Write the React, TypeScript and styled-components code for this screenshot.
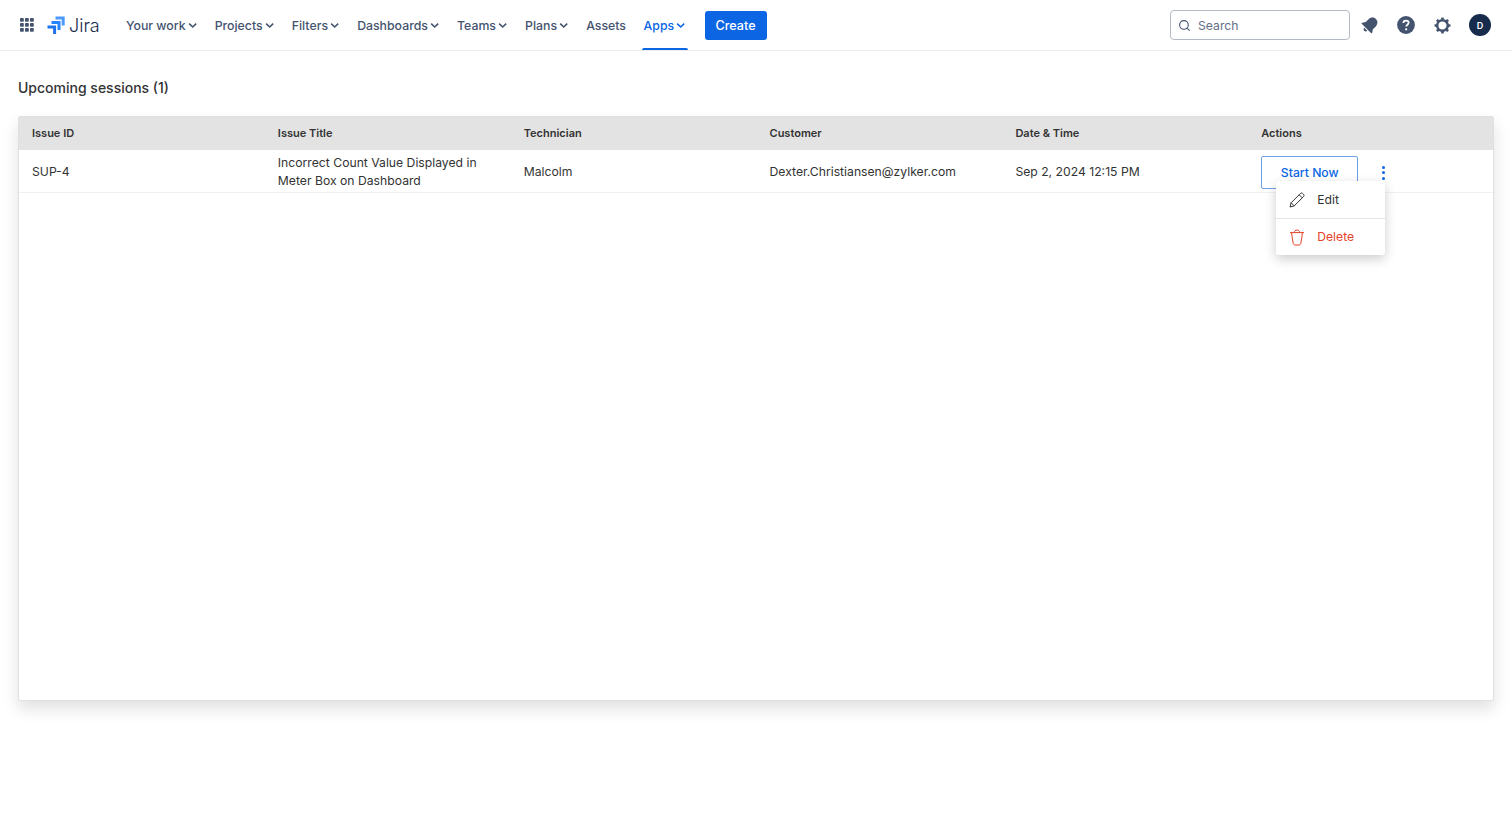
import React from "react";
import styled, { createGlobalStyle } from "styled-components";
import { Search as SearchIcon } from "lucide-react";

const Global = createGlobalStyle`
  html, body { margin: 0; padding: 0; background: #fff; }
  body { font-family: Inter, "Liberation Sans", sans-serif; -webkit-font-smoothing: antialiased; }
  * { box-sizing: border-box; }
`;

const Page = styled.div`
  width: 1512px;
  height: 824px;
  overflow: hidden;
`;

const TopBar = styled.header`
  height: 51px;
  border-bottom: 1px solid #ebecf0;
  display: flex;
  align-items: center;
  padding: 0 21px 0 19px;
`;

const LogoWrap = styled.div`
  display: flex;
  align-items: center;
  margin-left: 12px;
  width: 68px;
`;

const JiraName = styled.span`
  font-family: Inter, "Liberation Sans", sans-serif;
  font-size: 18px;
  font-weight: 300;
  color: #172b4d;
  margin-left: 4px;
`;

const Nav = styled.nav`
  display: flex;
  align-items: stretch;
  height: 50px;
  margin-left: 9px;
`;

const NavItem = styled.div<{ $active?: boolean }>`
  position: relative;
  display: flex;
  align-items: center;
  padding: 0 2px;
  margin-right: 13.6px;
  font-size: 12.3px;
  font-weight: 500;
  color: ${(p) => (p.$active ? "#0c66e4" : "#44546f")};
  ${(p) =>
    p.$active &&
    `&::after { content: ""; position: absolute; left: 0; right: 0; bottom: 0; height: 2px; border-radius: 2px 2px 0 0; background: #0c66e4; }`}
`;

const CreateButton = styled.button`
  width: 62px;
  height: 29px;
  margin-left: 3.3px;
  border: none;
  border-radius: 3px;
  background: #0c66e4;
  color: #fff;
  font: 500 12.6px Inter, sans-serif;
  padding: 0;
`;

const Right = styled.div`
  margin-left: auto;
  display: flex;
  align-items: center;
`;

const SearchBox = styled.div`
  width: 180px;
  height: 30px;
  border: 1px solid #b3b9c4;
  border-radius: 4px;
  display: flex;
  align-items: center;
  gap: 7px;
  padding: 0 7px;
  font-size: 12.2px;
  color: #626f86;
  margin-right: 10px;
`;

const IconButton = styled.span`
  width: 20px;
  height: 20px;
  margin-right: 16px;
  display: flex;
  align-items: center;
  justify-content: center;
`;

const Avatar = styled.span`
  width: 22px;
  height: 22px;
  margin-left: 1px;
  border-radius: 50%;
  background: #172b4d;
  color: #fff;
  font-size: 9px;
  font-weight: 600;
  display: flex;
  align-items: center;
  justify-content: center;
`;

const Main = styled.main`
  padding: 27px 18px 0;
`;

const Title = styled.h1`
  margin: 0 0 18px;
  height: 20px;
  font-size: 14px;
  line-height: 20px;
  font-weight: 500;
  color: #333;
`;

const Card = styled.section`
  position: relative;
  height: 585px;
  border: 1px solid #e0e0e0;
  border-radius: 2px;
  box-shadow: 0 8px 16px rgba(0, 0, 0, 0.12);
  background: #fff;
`;

const Row = styled.div`
  display: grid;
  grid-template-columns: repeat(6, 245.85px);
  padding-left: 13px;
`;

const HeadRow = styled(Row)`
  height: 33px;
  padding-bottom: 2px;
  background: #e3e3e3;
  align-items: center;
  font-size: 11px;
  font-weight: 600;
  color: #333;
`;

const BodyRow = styled(Row)`
  height: 43px;
  padding-top: 1px;
  border-bottom: 1px solid #f0f0f0;
  align-items: center;
  font-size: 12.2px;
  line-height: 18px;
  color: #333;
`;

const ActionCell = styled.div`
  position: relative;
  display: flex;
  align-items: center;
  padding-top: 2px;
`;

const StartButton = styled.button`
  width: 97px;
  height: 33px;
  background: #fff;
  border: 1px solid #6f9fe8;
  border-radius: 2px;
  color: #0c66e4;
  font: 500 12.2px Inter, sans-serif;
  padding: 0;
`;

const Kebab = styled.span`
  margin-left: 24px;
  display: flex;
  flex-direction: column;
  gap: 2.5px;
`;

const Dot = styled.i`
  width: 3px;
  height: 3px;
  border-radius: 50%;
  background: #0c66e4;
`;

const Menu = styled.div`
  position: absolute;
  left: 15px;
  top: 27px;
  width: 109px;
  height: 74px;
  background: #fff;
  border-radius: 3px;
  box-shadow: 0 4px 12px rgba(0, 0, 0, 0.2);
  display: flex;
  flex-direction: column;
`;

const MenuItem = styled.div<{ $danger?: boolean }>`
  flex: 1;
  display: flex;
  align-items: center;
  gap: 12px;
  padding: 1px 0 0 13px;
  font-size: 12.2px;
  color: ${(p) => (p.$danger ? "#e5432a" : "#333")};
  & + & {
    border-top: 1px solid #e4e4e4;
  }
`;

const navItems = ["Your work", "Projects", "Filters", "Dashboards", "Teams", "Plans"];

const Chevron = () => (
  <svg width="11.5" height="12" viewBox="0 0 11.5 12" fill="none" stroke="currentColor" strokeWidth="1.6">
    <path d="M3.2 4.6l3.5 3.4 3.5-3.4" />
  </svg>
);

const AppSwitcher = () => (
  <svg width="16" height="16" viewBox="0 0 16 16" fill="#44546f">
    {[1, 6, 11].flatMap((y) =>
      [1, 6, 11].map((x) => <rect key={`${x}-${y}`} x={x} y={y} width="3.8" height="3.8" rx="0.8" />)
    )}
  </svg>
);

const JiraMark = () => (
  <svg width="18" height="18" viewBox="0 0 18 18" fill="none" strokeWidth="3">
    <path d="M8.5 2H16.2V9.5" stroke="#4c9aff" />
    <path d="M4.5 6.5H12V14" stroke="#2684ff" />
    <path d="M0.5 11H7.6V18" stroke="#1f74ec" />
  </svg>
);

const Bell = () => (
  <svg width="20" height="20" viewBox="0 0 18 18" fill="#44546f">
    <g transform="rotate(45 9 9)">
      <path d="M9 1.5c-2.9 0-4.6 2.2-4.6 5v3.4L2.6 12.6v.9h12.8v-.9l-1.8-2.7V6.5c0-2.8-1.7-5-4.6-5z" />
      <path d="M7 14.4h4a2 2 0 0 1-4 0z" />
    </g>
  </svg>
);

const Help = () => (
  <svg width="18" height="18" viewBox="0 0 19 19">
    <circle cx="9.5" cy="9.5" r="9.4" fill="#44546f" />
    <path d="M6.7 7.4c0-1.6 1.2-2.6 2.8-2.6s2.8 1 2.8 2.4c0 2-2.5 2-2.5 3.8" fill="none" stroke="#fff" strokeWidth="1.9" />
    <circle cx="9.7" cy="14" r="1.2" fill="#fff" />
  </svg>
);

const Gear = () => (
  <svg width="17" height="17" viewBox="0 0 18 18" fill="none">
    <circle cx="9" cy="9" r="5.6" stroke="#44546f" strokeWidth="2.6" />
    {[0, 45, 90, 135, 180, 225, 270, 315].map((a) => (
      <rect key={a} x="7.6" y="0.5" width="2.8" height="3" rx="0.5" fill="#44546f" transform={`rotate(${a} 9 9)`} />
    ))}
  </svg>
);

const Pencil = () => (
  <svg width="16" height="16" viewBox="0 0 16 16" fill="none" stroke="#333" strokeWidth="1" strokeLinejoin="round">
    <path d="M1 15l1.1-4.2L11.4 1.5a1.6 1.6 0 0 1 2.3 0l.8.8a1.6 1.6 0 0 1 0 2.3L5.2 13.9z" />
    <path d="M2.1 10.8l3.1 3.1M10.2 2.8l3 3" />
  </svg>
);

const Trash = () => (
  <svg width="16" height="17" viewBox="0 0 16 17" fill="none" stroke="#e5432a" strokeWidth="1" strokeLinejoin="round">
    <path d="M1 3.6h14M5.4 3.6c0-1.6 1-2.6 2.6-2.6s2.6 1 2.6 2.6" />
    <path d="M2.6 3.6c.4 3.4.8 7.4 1.6 10.8.2 1 .9 1.6 1.8 1.6h4c.9 0 1.6-.6 1.8-1.6.8-3.4 1.2-7.4 1.6-10.8" />
  </svg>
);

export default function App() {
  return (
    <Page>
      <Global />
      <TopBar>
        <AppSwitcher />
        <LogoWrap>
          <JiraMark />
          <JiraName>Jira</JiraName>
        </LogoWrap>
        <Nav>
          {navItems.map((n) => (
            <NavItem key={n}>
              {n}
              <Chevron />
            </NavItem>
          ))}
          <NavItem>Assets</NavItem>
          <NavItem $active>
            Apps
            <Chevron />
          </NavItem>
        </Nav>
        <CreateButton>Create</CreateButton>
        <Right>
          <SearchBox>
            <SearchIcon size={13} color="#44546f" />
            Search
          </SearchBox>
          <IconButton><Bell /></IconButton>
          <IconButton><Help /></IconButton>
          <IconButton><Gear /></IconButton>
          <Avatar>D</Avatar>
        </Right>
      </TopBar>
      <Main>
        <Title>Upcoming sessions (1)</Title>
        <Card>
          <HeadRow>
            <div>Issue ID</div>
            <div>Issue Title</div>
            <div>Technician</div>
            <div>Customer</div>
            <div>Date &amp; Time</div>
            <div>Actions</div>
          </HeadRow>
          <BodyRow>
            <div>SUP-4</div>
            <div>Incorrect Count Value Displayed in<br />Meter Box on Dashboard</div>
            <div>Malcolm</div>
            <div>Dexter.Christiansen@zylker.com</div>
            <div>Sep 2, 2024 12:15 PM</div>
            <ActionCell>
              <StartButton>Start Now</StartButton>
              <Kebab><Dot /><Dot /><Dot /></Kebab>
              <Menu>
                <MenuItem><Pencil />Edit</MenuItem>
                <MenuItem $danger><Trash />Delete</MenuItem>
              </Menu>
            </ActionCell>
          </BodyRow>
        </Card>
      </Main>
    </Page>
  );
}
